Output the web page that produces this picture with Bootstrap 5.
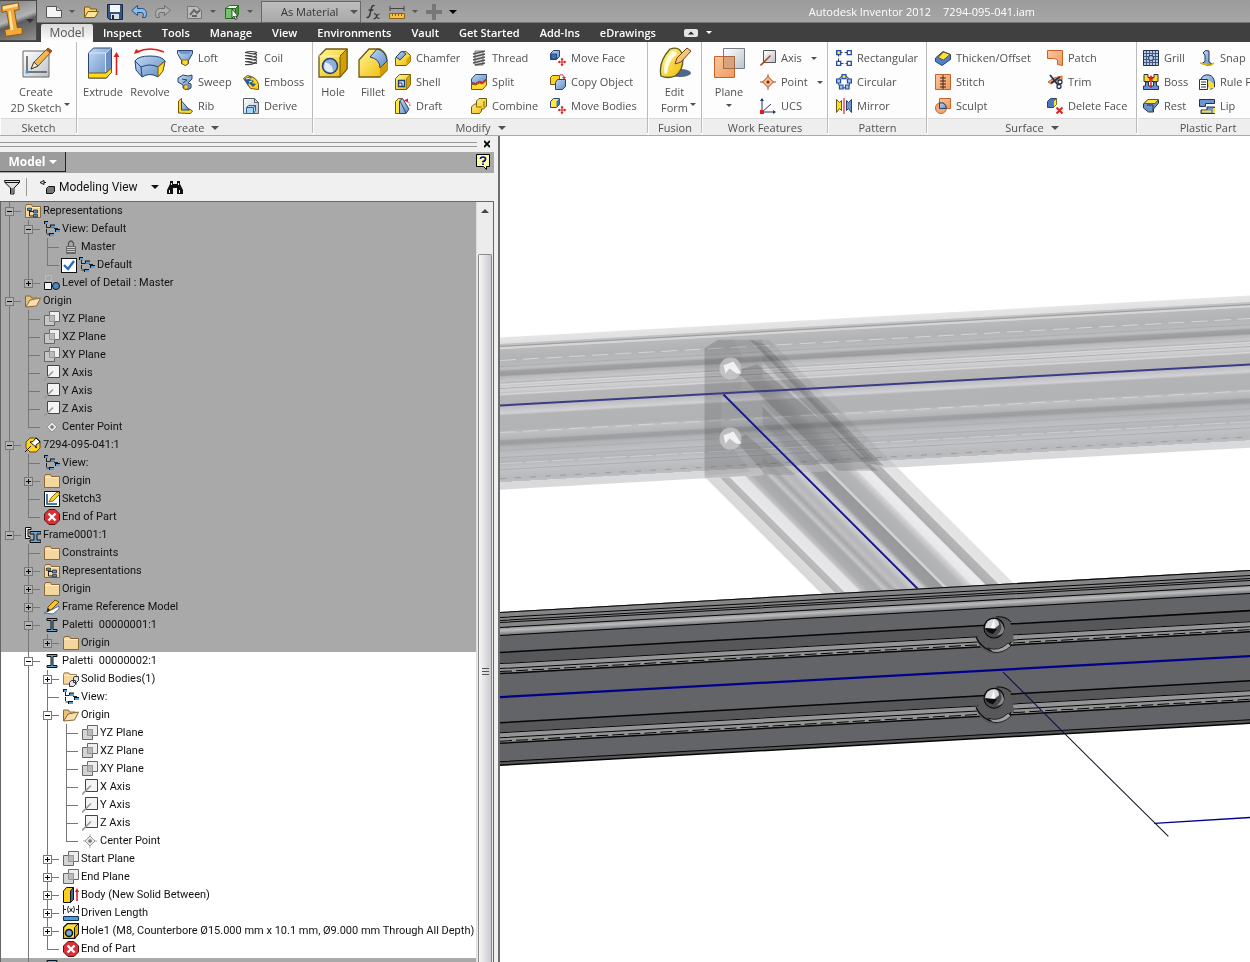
<!DOCTYPE html>
<html lang="en">
<head>
<meta charset="utf-8">
<meta name="viewport" content="width=device-width, initial-scale=1">
<title>Autodesk Inventor 2012 - 7294-095-041.iam</title>
<link rel="stylesheet" href="https://cdn.jsdelivr.net/npm/bootstrap@5.3.0/dist/css/bootstrap.min.css">
<style>
  body { font: 11px/16px "Open Sans", "Noto Sans", sans-serif; color: #505050; background: #f0f0f0; }
  button, select { font: inherit; color: inherit; background: none; border: 0; padding: 0; }
  .caret { display: inline-block; border: 4px solid transparent; border-top-color: currentColor; border-bottom: 0; }
  .caret-sm { border-width: 3px 3px 0; }
  .ic { width: 16px; height: 16px; flex: none; display: block; }
  .ic-lg { width: 32px; height: 32px; flex: none; display: block; }

  /* title bar and tabs */
  .app-head { display: grid; grid-template-columns: 37px 1fr; grid-template-rows: 23px 19px; background: linear-gradient(#9b9b9b, #a6a6a6 22px, #404040 23px); }
  .app-btn { grid-row: 1 / 3; height: 41px; border: 1px solid #4a4a4a; border-left: 0; background: linear-gradient(160deg, #7c7c7c, #b4b4b4 45%, #5d5d5d 55%, #8f8f8f); color: #333; overflow: hidden; }
  .app-btn svg { width: 26px; height: 39px; }
  .quick { color: #555; padding-left: 9px; }
  .quick .caret { margin: 0 8px 0 7px; }
  .material { width: 100px; height: 22px; padding-left: 19px; border: 1px solid #686868; background: linear-gradient(#bdbdbd, #a9a9a9); color: #333; appearance: none; }
  .pick { display: grid; align-items: center; }
  .pick > * { grid-area: 1 / 1; }
  .pick .caret { justify-self: end; margin: 0 3px 0 0; pointer-events: none; }
  .doc-title { color: #fff; margin-right: 215px; gap: 12px; }
  .tabs { gap: 20px; padding-left: 4px; }
  .tabs a { color: #fff; font-weight: 600; text-decoration: none; line-height: 19px; }
  .tabs a.active { color: #555; font-weight: 400; background: linear-gradient(#d9d9d9, #fff); width: 52px; text-align: center; margin: 1px -10px 0 0; border-radius: 2px 2px 0 0; line-height: 18px; font-size: 12px; }

  /* ribbon */
  .ribbon { background: #fdfdfd; border-bottom: 1px solid #aaa; padding-bottom: 2px; overflow: hidden; }
  .panel { flex: none; border-right: 1px solid #bbb; display: flex; flex-direction: column; }
  .panel-tools { height: 76px; padding: 4px 0 0 6px; display: flex; }
  .panel-name { height: 17px; line-height: 17px; text-align: center; background: #eee; border-top: 1px solid #dadada; margin-left: 1px; }
  .panel-name .caret { margin-left: 7px; vertical-align: 2px; }
  .tool { display: flex; align-items: center; gap: 5px; height: 24px; white-space: nowrap; }
  .tool-big { display: flex; flex-direction: column; align-items: center; padding-top: 1px; height: 72px; white-space: nowrap; }
  .tool-big svg { margin-bottom: 5px; }
  .drop { margin: 0 -8px 0 2px; vertical-align: 6px; }
  .gap-l { margin-left: 2px; }
  .w-40 { width: 40px; } .w-50 { width: 50px; } .w-54 { width: 54px; } .w-66 { width: 66px; }
  .w-72 { width: 72px; } .w-76 { width: 76px; } .w-79 { width: 79px; } .w-56 { width: 56px; } .w-112 { width: 112px; }
  .p-create { width: 236px; } .p-modify { width: 335px; } .p-work { width: 126px; } .p-pattern { width: 99px; }
  .p-surface { width: 210px; } .p-sketch { width: 77px; } .p-fusion { width: 54px; } .p-plastic { width: 142px; }

  /* browser panel */
  .browser { width: 500px; flex: none; border-right: 2px solid #6e6e6e; color: #111; font-family: Roboto, "Noto Sans", sans-serif; }
  .grip { height: 5px; border: solid #999; border-width: 1px 0; margin-right: 7px; }
  .browser-head { height: 21px; background: #a9a9a9; margin-right: 4px; }
  .browser-head .title { height: 20px; width: 66px; color: #fff; font: bold 12px/19px "Open Sans", sans-serif; border: solid #222; border-width: 0 1px 1px 0; background: #9c9c9c; }
  .title .caret { vertical-align: 2px; }
  .browser-bar { height: 29px; }
  .browser-bar .sep { width: 1px; height: 18px; background: #999; margin: 0 12px 0 6px; }
  .browser-bar select { width: 100px; appearance: none; font-size: 12px; }
  .tree-box { border: 1px solid #666; border-bottom: 0; margin-right: 4px; min-height: 0; }
  .tree { background: #a9a9a9; overflow: hidden; }
  .tree ul { list-style: none; margin: 0; padding: 0 0 0 19px; }
  .tree > ul { padding: 0; }
  .tree li { --x: 8px; background: linear-gradient(#777, #777) var(--x) 0 / 1px 100% no-repeat, linear-gradient(#777, #777) var(--x) 9px / 12px 1px no-repeat; }
  .tree li:last-child:not(.more) { background-size: 1px 9px, 12px 1px; }
  .tree li.active { --x: 27px; margin-left: -19px; padding-left: 19px; background-color: #fff; }
  .item { display: flex; align-items: center; height: 18px; padding-left: 24px; white-space: nowrap; }
  .item .ic { margin-right: 2px; }
  .item .exp + .ic { margin-left: 11px; }
  .exp { width: 9px; height: 9px; margin-left: -20px; flex: none; border: 1px solid #777; background: linear-gradient(#000, #000) center / 5px 1px no-repeat #b3b3b3; }
  .exp.plus { background: linear-gradient(#000, #000) center / 5px 1px no-repeat, linear-gradient(#000, #000) center / 1px 5px no-repeat #b3b3b3; }
  .active .exp { background-color: #fff; }
  .item input { appearance: none; width: 16px; height: 15px; margin: 0 2px 0 -2px; border: 1px solid #111; background: #fff; }
  .item input:checked { background: #fff url("data:image/svg+xml,%3Csvg xmlns='http://www.w3.org/2000/svg' viewBox='0 0 14 13'%3E%3Cpath d='M2 6l4 4 6-8' fill='none' stroke='%232a6cb8' stroke-width='2.4'/%3E%3C/svg%3E") center / 14px 13px; }
  .scroll { width: 17px; flex: none; background: #ececec; border-left: 1px solid #ddd; }
  .scroll .up { height: 52px; padding-top: 7px; }
  .up::before { content: ""; border: 4px solid transparent; border-top: 0; border-bottom-color: #444; }
  .thumb { border: 1px solid #888; border-bottom: 0; border-radius: 2px 2px 0 0; background: linear-gradient(90deg, #f8f8f8, #c9c9cf); margin: 0 1px; }
  .thumb::before { content: ""; flex: 59; }
  .thumb::after { content: ""; flex: 41; }
  .thumb i { height: 7px; width: 7px; background: repeating-linear-gradient(#555 0 1px, transparent 1px 3px); }
  .view { background: #fff; border-top: 1px solid #777; margin-top: -1px; min-width: 0; }
  .overlap { mix-blend-mode: multiply; opacity: .5; }
</style>
<script src="https://cdn.jsdelivr.net/npm/bootstrap@5.3.0/dist/js/bootstrap.bundle.min.js"></script>
</head>
<body class="vh-100 d-flex flex-column overflow-hidden">

<svg class="position-absolute" width="0" height="0" aria-hidden="true">
  <defs>
    <linearGradient id="gBlue" x2="1" y2="1"><stop stop-color="#c3daf3"/><stop offset="1" stop-color="#5f8ac4"/></linearGradient>
    <linearGradient id="gYel" x2="1" y2="1"><stop stop-color="#fff79a"/><stop offset="1" stop-color="#f0b800"/></linearGradient>
    <linearGradient id="gOr" x2="1" y2="1"><stop stop-color="#fcc79c"/><stop offset="1" stop-color="#ee9a62"/></linearGradient>
    <linearGradient id="gGr" x2="1" y2="1"><stop stop-color="#fff"/><stop offset="1" stop-color="#bcc3cc"/></linearGradient>
  </defs>
  <!-- quick access -->
  <symbol id="new" viewBox="0 0 16 16"><path d="M.5 2.500h10l5 4v7H.5z" fill="#f4f4f4" stroke="#555"/><path d="M10.500 2.500v4h5" fill="#ccc" stroke="#555"/></symbol>
  <symbol id="open" viewBox="0 0 16 16"><path d="M1.500 13V3h5l1 2h6v3" fill="#f8d36c" stroke="#7d5a10"/><path d="M1.500 13.500L5 7.500h10.500L12 13.500z" fill="#fce49a" stroke="#7d5a10"/></symbol>
  <symbol id="save" viewBox="0 0 16 16"><path d="M.5.500h15v15h-13l-2-2z" fill="#35557f" stroke="#182a45"/><path d="M3 1h10v7H3z" fill="#f5f7fa"/><path d="M4 10h8v5H4z" fill="#d8dde6"/><path d="M5 11h2v4H5z" fill="#182a45"/></symbol>
  <symbol id="undo" viewBox="0 0 16 16"><path d="M.7 6.500L6.500 1.500v3h4c4 0 5 3 5 6l-1 3h-3c1.500-3 1-5-1-5h-4v3z" fill="#8dbbe8" stroke="#1f4f86"/></symbol>
  <symbol id="redo" viewBox="0 0 16 16"><path d="M15.300 6.500L9.500 1.500v3h-4c-4 0-5 3-5 6l1 3h3c-1.500-3-1-5 1-5h4v3z" fill="#b0b0b0" stroke="#6d6d6d"/></symbol>
  <symbol id="update" viewBox="0 0 16 16"><path d="M.5 2.500h9l5 4v8H.5z" fill="#bbb" stroke="#777"/><path d="M3 11l4-5 3 3 3-3M5 12h5" fill="none" stroke="#666" stroke-width="2"/></symbol>
  <symbol id="selcube" viewBox="0 0 16 16"><path d="M1.500 4.500l4-3h9l-3 3z" fill="#eafbe6" stroke="#276b21"/><path d="M11.500 4.500l3-3v9l-3 3z" fill="#3e9a36" stroke="#276b21"/><path d="M1.500 4.500h10v10h-10z" fill="#73c267" stroke="#276b21"/><path d="M8 5v9l2-2 1.500 3.500 1.700-.8L11.700 12H14z" fill="#fff" stroke="#222" stroke-width=".8"/></symbol>
  <symbol id="fx" viewBox="0 0 16 16"><path d="M9.500 2C7 .5 6.500 3 5.500 8S3.500 14.500 1.500 13M3.500 6h5" fill="none" stroke="#333" stroke-width="1.400"/><path d="M9 10q2-1 2.500 2t3 2M14.500 10q-2 0-3 2.500T8.500 15" fill="none" stroke="#333" stroke-width="1.100"/></symbol>
  <symbol id="measure" viewBox="0 0 16 16"><path d="M1 2v5M15 2v5M1 4.500h14" stroke="#444" fill="none"/><path d="M.5 9.500h15v5H.5z" fill="#f5c14a" stroke="#90600f"/><path d="M3.500 10v2M6.500 10v2M9.500 10v2M12.500 10v2" stroke="#90600f"/></symbol>
  <symbol id="plus" viewBox="0 0 16 16"><path d="M6 0h4v6h6v4h-6v6H6v-6H0V6h6z" fill="#777"/></symbol>
  <!-- large tools -->
  <symbol id="sketch" viewBox="0 0 32 32"><path d="M3 4h26v26H3z" fill="url(#gGr)" stroke="#666"/><path d="M7 9v16h20" fill="none" stroke="#555" stroke-width="1.500"/><path d="M5.500 23.500h3v3h-3z" fill="#3f9ce0"/><path d="M11 22l3-7L28 1l4 3-14 15z" fill="#f0b84e" stroke="#7d4e12"/><path d="M14 15l4 4-7 3z" fill="#fbe6bd" stroke="#444"/><path d="M26 3l2-2 4 3-2 2.500z" fill="#a6522f"/></symbol>
  <symbol id="extrude" viewBox="0 0 32 32"><path d="M1.500 6l5-5h18v24l-5 6h-18z" fill="url(#gBlue)" stroke="#274472"/><path d="M1.500 6h17v19M18.500 6l6-5" fill="none" stroke="#dceafb"/><path d="M19 6.500l5-5V25l-5 5z" fill="#6a8fc4"/><path d="M1.500 26h17.500l5.500-5v4.500l-5.500 5.500H1.500z" fill="#ffd91c" stroke="#74560a"/><path d="M29.500 28V8" stroke="#e21b1b" stroke-width="1.600"/><path d="M26.500 10l3-5 3 5z" fill="#e21b1b"/></symbol>
  <symbol id="revolve" viewBox="0 0 32 32"><path d="M3 5Q16-1 30 5" fill="none" stroke="#e21b1b" stroke-width="1.600"/><path d="M0 7l2-5 4 3z" fill="#e21b1b"/><path d="M1 14q3-5 15-5t15 5l-2 9-5 7q-8-5-16 0L2 23z" fill="url(#gBlue)" stroke="#274472"/><path d="M1 14l6 6q9-4 17 0l7-6M7 20l1 10" fill="none" stroke="#274472"/><path d="M24 20l7-6-2 10-5 6z" fill="#ffdc2a" stroke="#74560a"/></symbol>
  <symbol id="hole" viewBox="0 0 32 32"><path d="M2 9l7-7h21v20l-7 8H2z" fill="url(#gYel)" stroke="#6b5a11" stroke-width="1.300"/><path d="M23 9l7-7v20l-7 8z" fill="#d29d05" stroke="#6b5a11"/><path d="M2 9h21" stroke="#fff9c0"/><circle cx="13" cy="19" r="7.500" fill="#8fb0db" stroke="#23406f" stroke-width="1.500"/><path d="M8 15q8 2 8 10-8 1-9-5z" fill="#e1edfa"/></symbol>
  <symbol id="fillet" viewBox="0 0 32 32"><path d="M2 13L12 2h11q7 4 7 12v9l-7 7H2z" fill="url(#gYel)" stroke="#6b5a11" stroke-width="1.300"/><path d="M13 10l7-8q9 2 10 12l-7 7q0-9-10-11z" fill="url(#gBlue)" stroke="#274472"/><path d="M23 21l7-6v8l-7 7z" fill="#d29d05"/></symbol>
  <symbol id="form" viewBox="0 0 32 32"><ellipse cx="21" cy="26" rx="11" ry="4" fill="#50668c"/><path d="M2 29Q-1 15 11 2q12-4 13 10 0 12-8 17-7 3-14 0z" fill="url(#gYel)" stroke="#555c22" stroke-width="1.300"/><path d="M5 26Q4 14 13 4q5 0 5 3Q9 14 8 27z" fill="#fffce0"/><path d="M16 17l2-6L28 1l4 3-10 11z" fill="#f3c577" stroke="#7a3d16"/></symbol>
  <symbol id="plane" viewBox="0 0 32 32"><path d="M10.500 1.500h21v20h-21z" fill="url(#gGr)" stroke="#777c84"/><path d="M1.500 9.500h20v21h-20z" fill="url(#gOr)" stroke="#c8622b"/><path d="M10.500 9.500h11v12h-11z" fill="#d9a17c" stroke="#9f6a4a"/></symbol>
  <!-- small tools -->
  <symbol id="loft" viewBox="0 0 16 16"><path d="M.5.500h15v3l-4 7v3l-3 2-4-2v-3l-4-7z" fill="url(#gBlue)" stroke="#274472"/><path d="M1 1h14l-3 3H4z" fill="#6f97cf"/><path d="M5 10h6v4l-3 1.500-3-2z" fill="#ffdc2a" stroke="#74560a" stroke-width=".7"/></symbol>
  <symbol id="sweep" viewBox="0 0 16 16"><path d="M1 4l5-3 5 1 4-1v4l-4 4 3 1v4l-4 2-4-2 0-3-5-3z" fill="url(#gBlue)" stroke="#274472"/><path d="M5 5l5 1-4 3" fill="none" stroke="#274472"/><path d="M7 11h4v4H7z" fill="#ffdc2a" stroke="#74560a" stroke-width=".7"/></symbol>
  <symbol id="rib" viewBox="0 0 16 16"><path d="M1.500 15V3l3-2.500V11h8l3 2-2 2.500z" fill="#ffdc2a" stroke="#74560a"/><path d="M4.500 3l8 9h-8z" fill="url(#gBlue)" stroke="#274472"/></symbol>
  <symbol id="coil" viewBox="0 0 16 16"><path d="M2 2.500q6-2 12 0M2 5.500q6 1 12-3M2 8.500q6 1 12-3M2 11.500q6 1 12-3M2 14.500q7 1 12-3M2 2.500l12 2M2 5.500l12 2M2 8.500l12 2M2 11.500l12 2" fill="none" stroke="#444" stroke-width="1.200"/></symbol>
  <symbol id="emboss" viewBox="0 0 16 16"><path d="M.5 4.500l4-3q10 2 11 9v5l-8-1z" fill="#ffd21c" stroke="#74560a"/><path d="M1 5l6-3 2 2-3 1 5 2-2 2 4 1-3 3-4-4-1 3z" fill="#2d5c9a"/><path d="M3 5l4-1M6 8l3-1" stroke="#fff"/></symbol>
  <symbol id="derive" viewBox="0 0 16 16"><path d="M.5.500h11l4 4v11H.5z" fill="url(#gGr)" stroke="#5a6270"/><path d="M11.500.500v4h4" fill="none" stroke="#5a6270"/><path d="M3.500 9.500l2-2h7v5l-2 3h-7z" fill="#a8d5f2" stroke="#2a6494"/><path d="M3.500 9.500h7v6M10.500 9.500l2-2" fill="none" stroke="#2a6494"/></symbol>
  <symbol id="chamfer" viewBox="0 0 16 16"><path d="M.5 8L6 1.500h5l4.500 4v6l-4 4H.5z" fill="url(#gYel)" stroke="#6b5a11"/><path d="M1 7l6-6 4 3-6 6z" fill="url(#gBlue)" stroke="#274472"/><path d="M11.500 9.500l4-4v6l-4 4z" fill="#d9a400"/></symbol>
  <symbol id="shell" viewBox="0 0 16 16"><path d="M.5 4.500l4-4h11v10l-4 5H.5z" fill="url(#gYel)" stroke="#6b5a11"/><path d="M11.500 4.500l4-4v10l-4 5z" fill="#d9a400" stroke="#6b5a11" stroke-width=".6"/><path d="M3.500 6.500h6v6h-6z" fill="#dceafb" stroke="#23406f" stroke-width="1.400"/><path d="M4 9h3v3" fill="none" stroke="#23406f"/></symbol>
  <symbol id="draft" viewBox="0 0 16 16"><path d="M.5 3.500l3-3h3l-2 15h-4z" fill="#ffe646" stroke="#6b5a11"/><path d="M4.500 3l3-2.500L14 11l-3 4.500H4.500z" fill="url(#gBlue)" stroke="#274472"/><path d="M5 3l6 12" stroke="#274472"/><path d="M11 2q3 1 4 6" fill="none" stroke="#e21b1b" stroke-dasharray="2 1"/><path d="M9 2.500l4-2v4z" fill="#e21b1b"/></symbol>
  <symbol id="thread" viewBox="0 0 16 16"><path d="M4 1h8v14H4z" fill="#ddd" stroke="#777"/><path d="M2 4l12-3M2 7l12-3M2 10l12-3M2 13l12-3M4 15l10-2" stroke="#555" stroke-width="1.300"/></symbol>
  <symbol id="split" viewBox="0 0 16 16"><path d="M.5 5l4-4.500h11v4l-4 4-3-1-4 2-4-1z" fill="url(#gBlue)" stroke="#274472"/><path d="M.5 10l4 1 4-2 3 1 4-4v5l-4 4.500H.5z" fill="#ffdc2a" stroke="#74560a"/><path d="M0 9l4 1 4-2 3.500 1L16 5" fill="none" stroke="#e21b1b" stroke-width="1.300"/></symbol>
  <symbol id="combine" viewBox="0 0 16 16"><path d="M.5 9l3-3h2V3l2.500-2.500h7.500V8l-3 3h-2v2l-2 2.500h-8z" fill="url(#gYel)" stroke="#6b5a11"/><path d="M5.500 6v3h5M13 3v6" fill="none" stroke="#8a6c0a"/></symbol>
  <symbol id="arrows4" viewBox="0 0 8 8"><path d="M4 0v8M0 4h8" stroke="#e21b1b" stroke-width="1.200"/><path d="M4 0L2.500 2h3zM4 8L2.500 6h3zM0 4l2-1.500v3zM8 4L6 2.500v3z" fill="#e21b1b"/></symbol>
  <symbol id="moveface" viewBox="0 0 16 16"><path d="M.5 3.500l3-3h6v6l-3 3h-6z" fill="url(#gBlue)" stroke="#274472"/><path d="M1 4h5.500v5H1z" fill="#3f70b2" stroke="#274472"/><use href="#arrows4" x="8" y="8" width="8" height="8"/></symbol>
  <symbol id="movebody" viewBox="0 0 16 16"><path d="M.5 3.500l3-3h6v6l-3 3h-6z" fill="#ffe646" stroke="#274472"/><path d="M6.500 3.500l3-3v6l-3 3z" fill="#3f70b2"/><use href="#arrows4" x="8" y="8" width="8" height="8"/></symbol>
  <symbol id="copyobj" viewBox="0 0 16 16"><path d="M.5 3.500l2-2h7v6l-2 3h-7z" fill="#ffd21c" stroke="#6b5a11"/><path d="M5.500 8.500l2-3h8v7l-3 3h-7z" fill="url(#gBlue)" stroke="#274472"/><path d="M10 1q4-1 4 3" fill="none" stroke="#e21b1b"/><path d="M12 3h4l-2 2.500z" fill="#e21b1b"/></symbol>
  <symbol id="axis" viewBox="0 0 16 16"><path d="M3.500.500h12v12h-12z" fill="url(#gGr)" stroke="#555"/><path d="M.5 15.500l10-10" stroke="#a84f26" stroke-width="1.600"/></symbol>
  <symbol id="point" viewBox="0 0 16 16"><path d="M8 0v16M0 8h16" stroke="#a84f26"/><path d="M8 2.500L13.500 8 8 13.500 2.500 8z" fill="#f7b98a" stroke="#a84f26"/><circle cx="8" cy="8" r="1.500" fill="#7a2c0c"/></symbol>
  <symbol id="ucs" viewBox="0 0 16 16"><path d="M2 1v13h13M2 14l9-8" stroke="#243a5e" fill="none"/><path d="M0 3l2-3 2 3zM13 12l3 2-3 2z" fill="#243a5e"/><path d="M0 12h4v4H0z" fill="#e21b1b"/></symbol>
  <symbol id="rect" viewBox="0 0 16 16"><path d="M2.500 2.500h11M2.500 2.500v11h11" stroke="#444" stroke-dasharray="4 2" fill="none"/><g fill="#fff" stroke="#1f4ea8" stroke-width="1.300"><path d="M.7.700h4v4h-4z" fill="#ffdc2a"/><path d="M11.300.700h4v4h-4zM.7 11.300h4v4h-4zM11.300 11.300h4v4h-4z"/></g></symbol>
  <symbol id="circ" viewBox="0 0 16 16"><circle cx="8" cy="8" r="6" stroke="#333" fill="none"/><g fill="#a9c5ec" stroke="#1f4ea8" stroke-width="1.200"><path d="M6 .6h4v4H6z" fill="#ffdc2a"/><path d="M.6 5h4v4h-4zM11.400 5h4v4h-4zM3.500 11h3.500v4H3.500zM9.500 11H13v4H9.500z"/></g></symbol>
  <symbol id="mirror" viewBox="0 0 16 16"><path d="M.5 1.500l3 3 2-2v10l-2-2-3 4z" fill="#ffdc2a" stroke="#6b5a11"/><path d="M15.500 1.500l-3 3-2-2v10l2-2 3 4z" fill="#6c95cf" stroke="#274472"/><path d="M8 0v16" stroke="#ef4a4a" stroke-width="1.500"/></symbol>
  <symbol id="thicken" viewBox="0 0 16 16"><path d="M.5 8L8 1.500l7.500 3v5L7 15.500l-6.500-4z" fill="#4f80c4" stroke="#274472"/><path d="M3 7.500L8.500 2 15 4.500 8.500 10z" fill="#ffe13c" stroke="#74560a"/></symbol>
  <symbol id="stitch" viewBox="0 0 16 16"><path d="M.5.500h15v15H.5z" fill="url(#gOr)" stroke="#c8622b"/><path d="M8 1v14M5 4h6M5 7h6M5 10h6M5 13h6" stroke="#4d2410"/></symbol>
  <symbol id="sculpt" viewBox="0 0 16 16"><path d="M4.500.500h11v10h-11z" fill="url(#gOr)" stroke="#c8622b"/><circle cx="6" cy="10" r="5.500" fill="#f0aa78" stroke="#c8622b"/><path d="M4.500 5Q11 4 11.300 10.500H4.500z" fill="url(#gBlue)" stroke="#274472"/></symbol>
  <symbol id="patch" viewBox="0 0 16 16"><path d="M.5.500h15v15l-5-1v-4q-1-2-4-2l-6 0z" fill="url(#gOr)" stroke="#c8622b"/></symbol>
  <symbol id="trim" viewBox="0 0 16 16"><path d="M1 8q5-5 14-6v4Q9 6 4 10z" fill="url(#gOr)" stroke="#c8622b"/><path d="M3 1l8 10M13 3L4 9" stroke="#26344d" stroke-width="1.800"/><circle cx="12" cy="12.500" r="2" fill="#fff" stroke="#26344d" stroke-width="1.300"/><circle cx="13" cy="8" r="2" fill="#fff" stroke="#26344d" stroke-width="1.300"/></symbol>
  <symbol id="delface" viewBox="0 0 16 16"><path d="M.5 3.500l3-3h6v6l-3 3h-6z" fill="#4a79bb" stroke="#274472"/><path d="M6.500 3.500l3-3v6l-3 3z" fill="#ffe646" stroke="#6b5a11" stroke-width=".6"/><path d="M9.500 9.500l6 6M15.500 9.500l-6 6" stroke="#d42a22" stroke-width="2"/></symbol>
  <symbol id="grill" viewBox="0 0 16 16"><path d="M.5.500h15v15H.5z" fill="#b9cbe4" stroke="#1f2f4e"/><path d="M3.500 1v14M6.500 1v14M9.500 1v14M12.500 1v14M1 3.500h14M1 6.500h14M1 9.500h14M1 12.500h14" stroke="#44597f"/><circle cx="8" cy="8" r="2.500" fill="#b9cbe4" stroke="#1f2f4e"/></symbol>
  <symbol id="boss" viewBox="0 0 16 16"><path d="M1 .5h4v3h2v4H1zM15 .5h-4v3H9v4h6z" fill="#ffdc2a" stroke="#333"/><path d="M2.500 8v4h-2v3.500h15V12h-2V8h-3v4h-5V8z" fill="#6c95cf" stroke="#1f3357"/><path d="M8 14V4" stroke="#e21b1b" stroke-width="1.500"/><path d="M5.500 5L8 1l2.500 4z" fill="#e21b1b"/></symbol>
  <symbol id="rest" viewBox="0 0 16 16"><path d="M.5 6l4-4h11v3l-5 6v3h-5l-5-4z" fill="#6c95cf" stroke="#1f3357"/><path d="M1 5.500L5 1.500h10.500L12 5.500z" fill="#ffe13c" stroke="#74560a"/><path d="M4 7h6v6" fill="none" stroke="#1f3357"/></symbol>
  <symbol id="snap" viewBox="0 0 16 16"><path d="M4 3q2-4 6-2v11l3 2-4 1.500-6-2 3-2V5z" fill="url(#gBlue)" stroke="#1f3357"/><path d="M1 13l10 2.500L15 13" fill="none" stroke="#e5b400" stroke-width="1.500"/></symbol>
  <symbol id="rule" viewBox="0 0 16 16"><path d="M2 5q2-5 8-4 5 1 5.500 8v4l-4 2.500" fill="url(#gBlue)" stroke="#1f3357"/><path d="M9 8q0-4 6 2v4l-5 1z" fill="#ffdc2a"/><path d="M.5 5.500h8v10h-8z" fill="#fff" stroke="#333"/><path d="M2 8h5M2 10.500h5M2 13h5" stroke="#333"/></symbol>
  <symbol id="lip" viewBox="0 0 16 16"><path d="M.5 1.500h15v4h-9v3h-6z" fill="#6c95cf" stroke="#1f3357"/><path d="M8 9h7.500v6.500H2V12h6z" fill="#6c95cf" stroke="#1f3357"/><path d="M3 13.500h9M15 10v5" stroke="#ffdc2a" stroke-width="2"/></symbol>
  <!-- browser items -->
  <symbol id="folder" viewBox="0 0 16 16"><path d="M.5 3.500l1-2h5l1 2h8v11H.5z" fill="#f3d6a0" stroke="#8c6732"/><path d="M1 4.500h14" stroke="#fff0cf"/></symbol>
  <symbol id="ofolder" viewBox="0 0 16 16"><path d="M.5 14V3h5l1 2h6v3" fill="#e8c27e" stroke="#8c6732"/><path d="M.8 14L5 7l10.500-2-4 8z" fill="#f7dfae" stroke="#8c6732"/></symbol>
  <symbol id="reps" viewBox="0 0 16 16"><use href="#folder" width="16" height="16"/><path d="M4.500 6v7h5M4.500 8.500H9" stroke="#222" fill="none"/><path d="M2.500 5h4v2.500h-4zM8.500 7h4v3h-4zM8.500 11.500h4v2.500h-4z" fill="#4f8fd0" stroke="#222" stroke-width=".7"/></symbol>
  <symbol id="viewrep" viewBox="0 0 16 16"><path d="M2.500 3v10M2.500 6.500H6M2.500 13H6M10 7.500h5" stroke="#222" fill="none" stroke-dasharray="4 1"/><path d="M0 1.500h4M6 5h5M11 9.500h5M5 13.500h5" stroke="#111" stroke-width="3"/><path d="M1 2h3M7 5.500h4M12 10h4M6 14h4" stroke="#5ba0dd" stroke-width="2"/></symbol>
  <symbol id="lock" viewBox="0 0 16 16"><path d="M5.500 7V4q2.500-4 5 0v3" fill="none" stroke="#555" stroke-width="1.300"/><path d="M3.500 7.500h9v7h-9z" fill="#ccc" stroke="#666"/><path d="M4 9.500h8M4 11.500h8M4 13.500h8" stroke="#666"/></symbol>
  <symbol id="lod" viewBox="0 0 16 16"><path d="M.5 7.500h7v7h-7z" fill="#eef5fc" stroke="#111"/><circle cx="12" cy="11" r="3.500" fill="#4b88c8" stroke="#111"/><path d="M1.500.500h6v5h-6z" fill="none" stroke="#bbb"/></symbol>
  <symbol id="planes" viewBox="0 0 16 16"><path d="M5.500.500h10v10h-10z" fill="#eee" stroke="#666"/><path d="M.5 4.500h10v10H.5z" fill="#ccc" fill-opacity=".85" stroke="#666"/><path d="M5.500 4.500h5v6h-5z" fill="#bbb" stroke="#999"/></symbol>
  <symbol id="taxis" viewBox="0 0 16 16"><path d="M3.500.500h12v12h-12z" fill="#f4f4f4" stroke="#444"/><path d="M0 15.500l9-9" stroke="#999" stroke-width="1.600"/></symbol>
  <symbol id="cpoint" viewBox="0 0 16 16"><path d="M8 1v14M1 8h14" stroke="#aaa"/><path d="M8 3l5 5-5 5-5-5z" fill="#e6e6e6" stroke="#999"/><circle cx="8" cy="8" r="1.800" fill="#777"/></symbol>
  <symbol id="pinned" viewBox="0 0 16 16"><path d="M1 5l4-4h7l3 3v7l-4 4H5l-4-4z" fill="#ffd21c" stroke="#6b4a00"/><path d="M0 15l6-6M5 5l7 6M5 5l3-.5L11 1l4 4-4 3v3" fill="#fff" stroke="#111"/></symbol>
  <symbol id="tsketch" viewBox="0 0 16 16"><path d="M.5.500h15v15H.5z" fill="#fff" stroke="#111"/><path d="M3 3v10h10" stroke="#174b8f" stroke-width="1.500" fill="none"/><path d="M5 11l2-4 6-6 3 2-7 7z" fill="#ffd21c" stroke="#6b4a00" stroke-width=".8"/></symbol>
  <symbol id="eop" viewBox="0 0 16 16"><path d="M5 .5h6L15.500 5v6L11 15.500H5L.5 11V5z" fill="#dd2f34" stroke="#5c1012"/><path d="M4.500 4.500l7 7M11.500 4.500l-7 7" stroke="#fff" stroke-width="2.400"/></symbol>
  <symbol id="frame" viewBox="0 0 16 16"><path d="M6 .5H.5v11H5v-2H3v-7h3z" fill="#eee" stroke="#111"/><path d="M5 4.500h11v2.500h-4v6h4v2.500H5V13h4V7H5z" fill="#6ba4cc" stroke="#111"/></symbol>
  <symbol id="beam" viewBox="0 0 16 16"><path d="M3 1.500h10v2H9v9h4v2H3v-2h4v-9H3z" fill="#6ba4cc" stroke="#111"/></symbol>
  <symbol id="refmodel" viewBox="0 0 16 16"><path d="M0 14l9-4 6-3v3l-6 5z" fill="#fff" stroke="#4470b0"/><path d="M3 13l1-5 7-7 4 2-7 7z" fill="#ffc61c" stroke="#6b4a00"/><path d="M3 13l1-4 2 2z" fill="#111"/></symbol>
  <symbol id="bodies" viewBox="0 0 16 16"><use href="#folder" width="14" height="15"/><path d="M6.500 11.500l2-2h4v4l-2 2h-4zM10.500 7l1-1.500h4v4l-2 2h-3z" fill="#dde8f5" stroke="#333"/></symbol>
  <symbol id="tbody" viewBox="0 0 16 16"><path d="M.5 4l3-3.500h7v12l-3 3h-7z" fill="#ffcf1c" stroke="#111"/><path d="M7.500 4l3-3.500v12l-3 3z" fill="#406aa4" stroke="#111"/><path d="M14 14V3" stroke="#d11" stroke-width="1.500"/><path d="M12 5l2-4 2 4z" fill="#d11"/></symbol>
  <symbol id="driven" viewBox="0 0 16 16"><path d="M.5 0v9M15.500 0v9M1 4.500h2M13 4.500h2M5.500 1q-2 3 0 7M10.500 1q2 3 0 7M6.500 3l3 4M9.500 3l-3 4" stroke="#222" fill="none"/><path d="M.5 11.500h15v4H.5z" fill="#4f9be0" stroke="#135"/></symbol>
  <symbol id="thole" viewBox="0 0 16 16"><path d="M.5 4.500l4-4h11v10l-4 5H.5z" fill="#ffe13c" stroke="#111" stroke-width="1.300"/><path d="M11.500 4.500l4-4v10l-4 5z" fill="#e2ab00" stroke="#111"/><circle cx="6" cy="10" r="3.500" fill="#7ba5d8" stroke="#111" stroke-width="1.500"/></symbol>
</svg>

<header class="app-head">
  <button class="app-btn d-flex align-items-center" aria-label="Application menu">
    <svg viewBox="0 0 27 39"><path d="M2 4l17-3 1 7-5 1 3 18 5-.5v7L6 36l-1-7 5-1-3-18-5 1z" fill="#f2a93a" stroke="#8c5410"/><path d="M3 5l15-3v3L3 8zM9 10l2-1 3 20-3 1z" fill="#ffe1a0"/></svg><span class="caret"></span>
  </button>
  <div class="quick d-flex align-items-center">
    <button aria-label="New"><svg class="ic"><use href="#new"/></svg></button><span class="caret caret-sm"></span>
    <button aria-label="Open" class="me-2 ms-0"><svg class="ic"><use href="#open"/></svg></button>
    <button aria-label="Save" class="me-2"><svg class="ic"><use href="#save"/></svg></button>
    <button aria-label="Undo" class="me-2"><svg class="ic"><use href="#undo"/></svg></button>
    <button aria-label="Redo" class="me-3"><svg class="ic"><use href="#redo"/></svg></button>
    <button aria-label="Update"><svg class="ic"><use href="#update"/></svg></button><span class="caret caret-sm"></span>
    <button aria-label="Select"><svg class="ic"><use href="#selcube"/></svg></button><span class="caret caret-sm"></span>
    <div class="pick"><select class="material" aria-label="Material"><option>As Material</option></select><span class="caret"></span></div>
    <button aria-label="Parameters" class="mx-1"><svg class="ic"><use href="#fx"/></svg></button>
    <button aria-label="Measure" class="ms-1"><svg class="ic"><use href="#measure"/></svg></button><span class="caret caret-sm"></span>
    <button aria-label="Add"><svg class="ic"><use href="#plus"/></svg></button><span class="caret text-black"></span>
    <div class="doc-title ms-auto d-flex"><span>Autodesk Inventor 2012</span><span>7294-095-041.iam</span></div>
  </div>
  <nav class="tabs d-flex align-items-stretch">
    <a class="active" href="#">Model</a><a href="#">Inspect</a><a href="#">Tools</a><a href="#">Manage</a><a href="#">View</a><a href="#">Environments</a><a href="#">Vault</a><a href="#">Get Started</a><a href="#">Add-Ins</a><a href="#">eDrawings</a>
    <button class="d-flex align-items-center gap-2 ms-2 text-white" aria-label="Minimize ribbon"><svg width="14" height="8"><rect width="14" height="8" rx="2" fill="#e4e4e8"/><path d="M4 5.500l3-3 3 3z" fill="#222"/></svg><span class="caret caret-sm"></span></button>
  </nav>
</header>

<section class="ribbon d-flex">
  <div class="panel p-sketch"><div class="panel-tools ps-0">
    <button class="tool-big w-72"><svg class="ic-lg"><use href="#sketch"/></svg><span>Create</span><span>2D Sketch<i class="caret caret-sm drop"></i></span></button></div>
    <div class="panel-name">Sketch</div></div>
  <div class="panel p-create"><div class="panel-tools">
    <button class="tool-big w-40"><svg class="ic-lg"><use href="#extrude"/></svg>Extrude</button>
    <button class="tool-big w-54"><svg class="ic-lg"><use href="#revolve"/></svg>Revolve</button>
    <div class="w-66"><button class="tool"><svg class="ic"><use href="#loft"/></svg>Loft</button><button class="tool"><svg class="ic"><use href="#sweep"/></svg>Sweep</button><button class="tool"><svg class="ic"><use href="#rib"/></svg>Rib</button></div>
    <div><button class="tool"><svg class="ic"><use href="#coil"/></svg>Coil</button><button class="tool"><svg class="ic"><use href="#emboss"/></svg>Emboss</button><button class="tool"><svg class="ic"><use href="#derive"/></svg>Derive</button></div></div>
    <div class="panel-name">Create<i class="caret"></i></div></div>
  <div class="panel p-modify"><div class="panel-tools ps-0">
    <button class="tool-big w-40"><svg class="ic-lg"><use href="#hole"/></svg>Hole</button>
    <button class="tool-big w-40"><svg class="ic-lg"><use href="#fillet"/></svg>Fillet</button>
    <div class="w-76 gap-l"><button class="tool"><svg class="ic"><use href="#chamfer"/></svg>Chamfer</button><button class="tool"><svg class="ic"><use href="#shell"/></svg>Shell</button><button class="tool"><svg class="ic"><use href="#draft"/></svg>Draft</button></div>
    <div class="w-79"><button class="tool"><svg class="ic"><use href="#thread"/></svg>Thread</button><button class="tool"><svg class="ic"><use href="#split"/></svg>Split</button><button class="tool"><svg class="ic"><use href="#combine"/></svg>Combine</button></div>
    <div><button class="tool"><svg class="ic"><use href="#moveface"/></svg>Move Face</button><button class="tool"><svg class="ic"><use href="#copyobj"/></svg>Copy Object</button><button class="tool"><svg class="ic"><use href="#movebody"/></svg>Move Bodies</button></div></div>
    <div class="panel-name">Modify<i class="caret"></i></div></div>
  <div class="panel p-fusion"><div class="panel-tools ps-0">
    <button class="tool-big w-54"><svg class="ic-lg"><use href="#form"/></svg><span>Edit</span><span>Form<i class="caret caret-sm drop"></i></span></button></div>
    <div class="panel-name">Fusion</div></div>
  <div class="panel p-work"><div class="panel-tools ps-0">
    <button class="tool-big w-54"><svg class="ic-lg"><use href="#plane"/></svg><span>Plane</span><i class="caret caret-sm mt-1"></i></button>
    <div class="ms-1"><button class="tool"><svg class="ic"><use href="#axis"/></svg>Axis<i class="caret caret-sm ms-1"></i></button><button class="tool"><svg class="ic"><use href="#point"/></svg>Point<i class="caret caret-sm ms-1"></i></button><button class="tool"><svg class="ic"><use href="#ucs"/></svg>UCS</button></div></div>
    <div class="panel-name">Work Features</div></div>
  <div class="panel p-pattern"><div class="panel-tools">
    <div class="gap-l"><button class="tool"><svg class="ic"><use href="#rect"/></svg>Rectangular</button><button class="tool"><svg class="ic"><use href="#circ"/></svg>Circular</button><button class="tool"><svg class="ic"><use href="#mirror"/></svg>Mirror</button></div></div>
    <div class="panel-name">Pattern</div></div>
  <div class="panel p-surface"><div class="panel-tools">
    <div class="w-112 gap-l"><button class="tool"><svg class="ic"><use href="#thicken"/></svg>Thicken/Offset</button><button class="tool"><svg class="ic"><use href="#stitch"/></svg>Stitch</button><button class="tool"><svg class="ic"><use href="#sculpt"/></svg>Sculpt</button></div>
    <div><button class="tool"><svg class="ic"><use href="#patch"/></svg>Patch</button><button class="tool"><svg class="ic"><use href="#trim"/></svg>Trim</button><button class="tool"><svg class="ic"><use href="#delface"/></svg>Delete Face</button></div></div>
    <div class="panel-name">Surface<i class="caret"></i></div></div>
  <div class="panel p-plastic"><div class="panel-tools">
    <div class="w-56"><button class="tool"><svg class="ic"><use href="#grill"/></svg>Grill</button><button class="tool"><svg class="ic"><use href="#boss"/></svg>Boss</button><button class="tool"><svg class="ic"><use href="#rest"/></svg>Rest</button></div>
    <div><button class="tool"><svg class="ic"><use href="#snap"/></svg>Snap</button><button class="tool"><svg class="ic"><use href="#rule"/></svg>Rule F</button><button class="tool"><svg class="ic"><use href="#lip"/></svg>Lip</button></div></div>
    <div class="panel-name">Plastic Part</div></div>
</section>

<main class="d-flex flex-fill overflow-hidden">
  <aside class="browser d-flex flex-column">
    <div class="d-flex align-items-center pt-1 pb-1"><div class="grip flex-fill"></div><button class="me-1 pe-1 lh-1" aria-label="Close panel"><svg width="6" height="8" class="d-block" viewBox="0 0 6 8"><path d="M0 1l6 6M6 1L0 7" stroke="#000" stroke-width="1.800"/></svg></button></div>
    <div class="browser-head d-flex justify-content-between align-items-start">
      <button class="title">Model <i class="caret ms-0"></i></button>
      <button aria-label="Help" class="pe-1"><svg width="14" height="18" viewBox="0 -2 14 18" class="d-block"><path d="M.5.500h13v12h-3v3l-3-3h-7z" fill="#ffffa0" stroke="#000"/><path d="M4.500 5Q4.500 3 7 3t2.500 2T7 7.500V8.500M7 9.500V11" fill="none" stroke="#00a" stroke-width="1.700"/></svg></button>
    </div>
    <div class="browser-bar d-flex align-items-center">
      <button aria-label="Filter" class="ms-1"><svg class="ic"><path d="M.5 1.500h15v2L10 9v6H6.500V9L1 3.500z" fill="#ddd" stroke="#111"/><path d="M1 3.500h14" stroke="#111"/><path d="M7 9l2 0v6H7z" fill="#777"/></svg></button>
      <span class="sep"></span>
      <svg class="ic me-1"><path d="M1 3.500l4-2v4z" fill="none" stroke="#111"/><path d="M7.500 9.500l2-2h6v5l-2 2h-6z" fill="#777" stroke="#111"/><path d="M5 3.500h2" stroke="#111"/></svg>
      <div class="pick"><select aria-label="Browser view"><option>Modeling View</option></select><span class="caret me-0"></span></div>
      <button aria-label="Find" class="ms-2"><svg class="ic"><path d="M3 2h3v3h4V2h3v3l3 6v4h-6V9H6v6H0v-4l3-6z" fill="#111"/><path d="M2.500 11v3M12.500 11v3M4.500 4v2M11.500 4v2" stroke="#eee"/></svg></button>
    </div>
    <div class="tree-box d-flex flex-fill">
      <div class="tree flex-fill"><ul>
        <li><div class="item"><button class="exp" aria-label="Collapse"></button><svg class="ic"><use href="#reps"/></svg>Representations</div>
          <ul>
            <li><div class="item"><button class="exp" aria-label="Collapse"></button><svg class="ic"><use href="#viewrep"/></svg>View: Default</div>
              <ul><li><div class="item"><svg class="ic"><use href="#lock"/></svg>Master</div></li>
              <li><label class="item"><input type="checkbox" checked><svg class="ic"><use href="#viewrep"/></svg>Default</label></li></ul></li>
            <li><div class="item"><button class="exp plus" aria-label="Expand"></button><svg class="ic"><use href="#lod"/></svg>Level of Detail : Master</div></li>
          </ul></li>
        <li><div class="item"><button class="exp" aria-label="Collapse"></button><svg class="ic"><use href="#ofolder"/></svg>Origin</div>
          <ul>
            <li><div class="item"><svg class="ic"><use href="#planes"/></svg>YZ Plane</div></li>
            <li><div class="item"><svg class="ic"><use href="#planes"/></svg>XZ Plane</div></li>
            <li><div class="item"><svg class="ic"><use href="#planes"/></svg>XY Plane</div></li>
            <li><div class="item"><svg class="ic"><use href="#taxis"/></svg>X Axis</div></li>
            <li><div class="item"><svg class="ic"><use href="#taxis"/></svg>Y Axis</div></li>
            <li><div class="item"><svg class="ic"><use href="#taxis"/></svg>Z Axis</div></li>
            <li><div class="item"><svg class="ic"><use href="#cpoint"/></svg>Center Point</div></li>
          </ul></li>
        <li><div class="item"><button class="exp" aria-label="Collapse"></button><svg class="ic"><use href="#pinned"/></svg>7294-095-041:1</div>
          <ul>
            <li><div class="item"><svg class="ic"><use href="#viewrep"/></svg>View:</div></li>
            <li><div class="item"><button class="exp plus" aria-label="Expand"></button><svg class="ic"><use href="#folder"/></svg>Origin</div></li>
            <li><div class="item"><svg class="ic"><use href="#tsketch"/></svg>Sketch3</div></li>
            <li><div class="item"><svg class="ic"><use href="#eop"/></svg>End of Part</div></li>
          </ul></li>
        <li><div class="item"><button class="exp" aria-label="Collapse"></button><svg class="ic"><use href="#frame"/></svg>Frame0001:1</div>
          <ul>
            <li><div class="item"><svg class="ic"><use href="#folder"/></svg>Constraints</div></li>
            <li><div class="item"><button class="exp plus" aria-label="Expand"></button><svg class="ic"><use href="#reps"/></svg>Representations</div></li>
            <li><div class="item"><button class="exp plus" aria-label="Expand"></button><svg class="ic"><use href="#folder"/></svg>Origin</div></li>
            <li><div class="item"><button class="exp plus" aria-label="Expand"></button><svg class="ic"><use href="#refmodel"/></svg>Frame Reference Model</div></li>
            <li><div class="item"><button class="exp" aria-label="Collapse"></button><svg class="ic"><use href="#beam"/></svg>Paletti&nbsp; 00000001:1</div>
              <ul><li><div class="item"><button class="exp plus" aria-label="Expand"></button><svg class="ic"><use href="#folder"/></svg>Origin</div></li></ul></li>
            <li class="active"><div class="item"><button class="exp" aria-label="Collapse"></button><svg class="ic"><use href="#beam"/></svg>Paletti&nbsp; 00000002:1</div>
              <ul>
                <li><div class="item"><button class="exp plus" aria-label="Expand"></button><svg class="ic"><use href="#bodies"/></svg>Solid Bodies(1)</div></li>
                <li><div class="item"><svg class="ic"><use href="#viewrep"/></svg>View:</div></li>
                <li><div class="item"><button class="exp" aria-label="Collapse"></button><svg class="ic"><use href="#ofolder"/></svg>Origin</div>
                  <ul>
                    <li><div class="item"><svg class="ic"><use href="#planes"/></svg>YZ Plane</div></li>
                    <li><div class="item"><svg class="ic"><use href="#planes"/></svg>XZ Plane</div></li>
                    <li><div class="item"><svg class="ic"><use href="#planes"/></svg>XY Plane</div></li>
                    <li><div class="item"><svg class="ic"><use href="#taxis"/></svg>X Axis</div></li>
                    <li><div class="item"><svg class="ic"><use href="#taxis"/></svg>Y Axis</div></li>
                    <li><div class="item"><svg class="ic"><use href="#taxis"/></svg>Z Axis</div></li>
                    <li><div class="item"><svg class="ic"><use href="#cpoint"/></svg>Center Point</div></li>
                  </ul></li>
                <li><div class="item"><button class="exp plus" aria-label="Expand"></button><svg class="ic"><use href="#planes"/></svg>Start Plane</div></li>
                <li><div class="item"><button class="exp plus" aria-label="Expand"></button><svg class="ic"><use href="#planes"/></svg>End Plane</div></li>
                <li><div class="item"><button class="exp plus" aria-label="Expand"></button><svg class="ic"><use href="#tbody"/></svg>Body (New Solid Between)</div></li>
                <li><div class="item"><button class="exp plus" aria-label="Expand"></button><svg class="ic"><use href="#driven"/></svg>Driven Length</div></li>
                <li><div class="item"><button class="exp plus" aria-label="Expand"></button><svg class="ic"><use href="#thole"/></svg>Hole1 (M8, Counterbore Ø15.000 mm x 10.1 mm, Ø9.000 mm Through All Depth)</div></li>
                <li><div class="item"><svg class="ic"><use href="#eop"/></svg>End of Part</div></li>
              </ul></li>
            <li class="more"><div class="item"><svg class="ic"><use href="#beam"/></svg></div></li>
          </ul></li>
      </ul></div>
      <div class="scroll d-flex flex-column"><div class="up d-flex justify-content-center align-items-start"></div><div class="thumb flex-fill d-flex flex-column align-items-center"><i></i></div></div>
    </div>
  </aside>

  <section class="view flex-fill">
    <svg class="w-100 h-100 d-block" viewBox="500 138 750 824" preserveAspectRatio="xMinYMin slice" role="img" aria-label="Aluminium frame profiles">
      <defs>
        <linearGradient id="ghost" gradientUnits="userSpaceOnUse" x1="0" y1="0" x2="0" y2="152">
          <stop offset="0" stop-color="#e6e6e7"/><stop offset=".04" stop-color="#e0e0e1"/><stop offset=".045" stop-color="#c4c4c6"/><stop offset=".06" stop-color="#bbb"/><stop offset=".07" stop-color="#dcdcdd"/><stop offset=".08" stop-color="#b9babc"/>
          <stop offset=".14" stop-color="#b2b3b5"/><stop offset=".21" stop-color="#bcbdbf"/><stop offset=".225" stop-color="#a0a1a3"/><stop offset=".25" stop-color="#9a9b9d"/><stop offset=".26" stop-color="#b8b8ba"/><stop offset=".29" stop-color="#c6c6c8"/><stop offset=".3" stop-color="#b5b5b7"/><stop offset=".33" stop-color="#d6d6d8"/><stop offset=".36" stop-color="#c8c8ca"/>
          <stop offset=".39" stop-color="#b6b6b8"/><stop offset=".44" stop-color="#b4b4b5"/><stop offset=".46" stop-color="#bdbdc2"/><stop offset=".5" stop-color="#d2d2d6"/><stop offset=".515" stop-color="#b3b4b5"/><stop offset=".61" stop-color="#b2b3b5"/><stop offset=".63" stop-color="#bfc0c3"/><stop offset=".67" stop-color="#b4b5b7"/><stop offset=".68" stop-color="#a0a1a3"/><stop offset=".7" stop-color="#9c9d9f"/>
          <stop offset=".72" stop-color="#b2b3b6"/><stop offset=".78" stop-color="#bebfc2"/><stop offset=".82" stop-color="#b4b5b8"/><stop offset=".86" stop-color="#c2c3c6"/><stop offset=".93" stop-color="#b8b9bc"/><stop offset=".95" stop-color="#bebfc1"/><stop offset=".951" stop-color="#d9d9db"/><stop offset="1" stop-color="#d9d9db"/>
        </linearGradient>
        <linearGradient id="brace" gradientUnits="userSpaceOnUse" x1="226" y1="0" x2="428" y2="0">
          <stop offset="0" stop-color="#d8d8d9"/><stop offset=".07" stop-color="#dcdcdd"/><stop offset=".075" stop-color="#b4b5b6"/><stop offset=".12" stop-color="#bdbdbe"/><stop offset=".125" stop-color="#e8e8ea"/><stop offset=".2" stop-color="#e4e4e6"/><stop offset=".21" stop-color="#c4c4c6"/><stop offset=".25" stop-color="#acadaf"/><stop offset=".31" stop-color="#a8a9ab"/><stop offset=".33" stop-color="#c9c9cb"/><stop offset=".37" stop-color="#a5a6a8"/><stop offset=".4" stop-color="#c0c0c2"/><stop offset=".44" stop-color="#b4b5b7"/><stop offset=".49" stop-color="#d0d0d1"/>
          <stop offset=".53" stop-color="#cfcfd1"/><stop offset=".56" stop-color="#9c9d9f"/><stop offset=".63" stop-color="#969799"/><stop offset=".64" stop-color="#dcdcdd"/><stop offset=".66" stop-color="#b0b1b3"/><stop offset=".73" stop-color="#b4b5b7"/><stop offset=".78" stop-color="#d4d4d6"/><stop offset=".79" stop-color="#e8e8ea"/><stop offset=".85" stop-color="#ececee"/><stop offset=".86" stop-color="#aeaeb0"/><stop offset=".92" stop-color="#b6b6b8"/><stop offset=".925" stop-color="#e4e4e5"/><stop offset="1" stop-color="#e2e2e3"/>
        </linearGradient>
        <linearGradient id="lip1" x2="0" y2="1"><stop stop-color="#8a8a8c"/><stop offset=".45" stop-color="#bcbcbe"/><stop offset="1" stop-color="#77787a"/></linearGradient>
        <clipPath id="braceTop"><path d="M704 350l14-9h50l128 127-192 12z"/></clipPath>
        <clipPath id="braceLow"><path d="M704 480l192-12 118 117-194 11z"/></clipPath>
        <g id="bore">
          <path d="M-18 10Q-14 25 2 26 12 24 16 15l4-1-2-14Q16-11 4-11z" fill="#58585b"/>
          <path d="M-18 9Q-12 22 2 24 12 23 17 14" fill="none" stroke="#0a0a0a" stroke-width="1.200"/>
          <path d="M-6 20q11 4 20-5l3 3q-9 8-18 6z" fill="#a3a3a5" stroke="#111" stroke-width=".8"/>
          <circle cx="0" cy="0" r="10" fill="#48484a" stroke="#000"/>
          <path d="M-9 0q1-9 10-9 4 1 4 6L0 1z" fill="#d9d9db"/><path d="M-3 0l3-9 1 9z" fill="#fff"/><path d="M-9 0l12 1-4 5q-6-1-8-6z" fill="#0c0c0c"/><path d="M6-6q4 7-3 13 7 0 7-6-1-5-4-7z" fill="#85858a"/>
          <path d="M2-11q9-1 15 5" fill="none" stroke="#0a0a0a"/>
        </g>
      </defs>
      <!-- translucent rear profile -->
      <g transform="translate(500 339) skewY(-3.2)">
        <path d="M0 0h750v152H0z" fill="url(#ghost)"/>
        <g stroke="#d4d4d6" stroke-dasharray="16 7" fill="none"><path d="M0 23h750M0 95h750"/><path d="M0 54h750M0 126h750" stroke-dasharray="22 4" stroke="#ceced0"/></g>
        <g stroke="#9c9d9f" fill="none"><path d="M0 9h750"/><path d="M0 141h750" stroke-dasharray="6 9"/></g>
        <g stroke="#d6d6d8" stroke-width="1.500"><path d="M0 11h750M0 47h750M0 57h750"/></g>
        <g stroke="#adaeb1"><path d="M0 29h750M0 51h750M0 113h750M0 120h750M0 132h750"/></g>
      </g>
      <!-- translucent cross brace -->
      <g clip-path="url(#braceLow)"><path transform="matrix(1 0 1 1 0 0)" d="M226 460h202v140H226z" fill="url(#brace)"/></g>
      <g clip-path="url(#braceTop)" class="overlap"><path transform="matrix(1 0 1 1 0 0)" d="M226 330h202v160H226z" fill="url(#brace)"/><path d="M704 340h58v140h-58z" fill="#c4c4c6"/></g>
      <path d="M704 350l14-9h15l8 15v35l-20 8v36l30 38-47 4z" fill="#777" opacity=".12"/>
      <path d="M749 341l120 124 14 2-119-121z" fill="#444" opacity=".25"/>
      <path d="M735 372l102 100h40L757 366z" fill="#444" opacity=".24"/>
      <path d="M735 442l30 34h30l-50-40z" fill="#444" opacity=".2"/>
      <g fill="#c8c8ca" opacity=".8"><circle cx="730" cy="370" r="11"/><circle cx="730" cy="440" r="11"/></g>
      <path d="M723 367l10-4 2 3 6 9h-5l-7-5-4 5zM723 437l10-4 2 3 6 9h-5l-7-5-4 5z" fill="#f1f1f2"/>
      <path d="M500 407L1250 366" stroke="#3c3c86" stroke-width="2"/>
      <path d="M723 396l194 194" stroke="#1c1c86" stroke-width="2"/>
      <!-- front profile -->
      <g transform="translate(500 613) skewY(-3.2)">
        <path d="M0 0h750v153H0z" fill="#636467"/>
        <path d="M0 0h750v15H0z" fill="#858587"/>
        <path d="M0 15h750v8H0z" fill="url(#lip1)"/>
        <path d="M0 40h750v11H0zM0 110h750v10H0zM0 149h750v4H0z" fill="#575759"/>
        <path d="M0 51h750v10H0zM0 120h750v11H0z" fill="#949496"/>
        <g stroke="#060606" fill="none" stroke-width="1">
          <path d="M0 .5h750M0 15.500h750M0 23.500h750M0 51.500h750M0 56.500h750M0 120.500h750M0 125.500h750M0 149.500h750"/>
          <path d="M0 5.500h750M0 10.500h750M0 8.500h750"/>
          <path d="M0 40.500h750M0 110.500h750" stroke-width="1.500"/><path d="M0 61.500h750M0 131h750" stroke-width="1.500"/><path d="M0 59.500h750M0 129h750" stroke-dasharray="12 4"/>
          <path d="M0 153h750" stroke-width="1.500"/>
        </g>
      </g>
      <use href="#bore" x="993" y="629"/><use href="#bore" x="993" y="699"/>
      <path d="M500 698L1250 657" stroke="#00008b" stroke-width="2.200"/>
      <path d="M1002 673l60 60" stroke="#0a0a50"/><path d="M1062 733l105 104" stroke="#111128"/>
      <path d="M1153 824L1250 818" stroke="#00008b" stroke-width="1.300"/>
    </svg>
  </section>
</main>
</body>
</html>
